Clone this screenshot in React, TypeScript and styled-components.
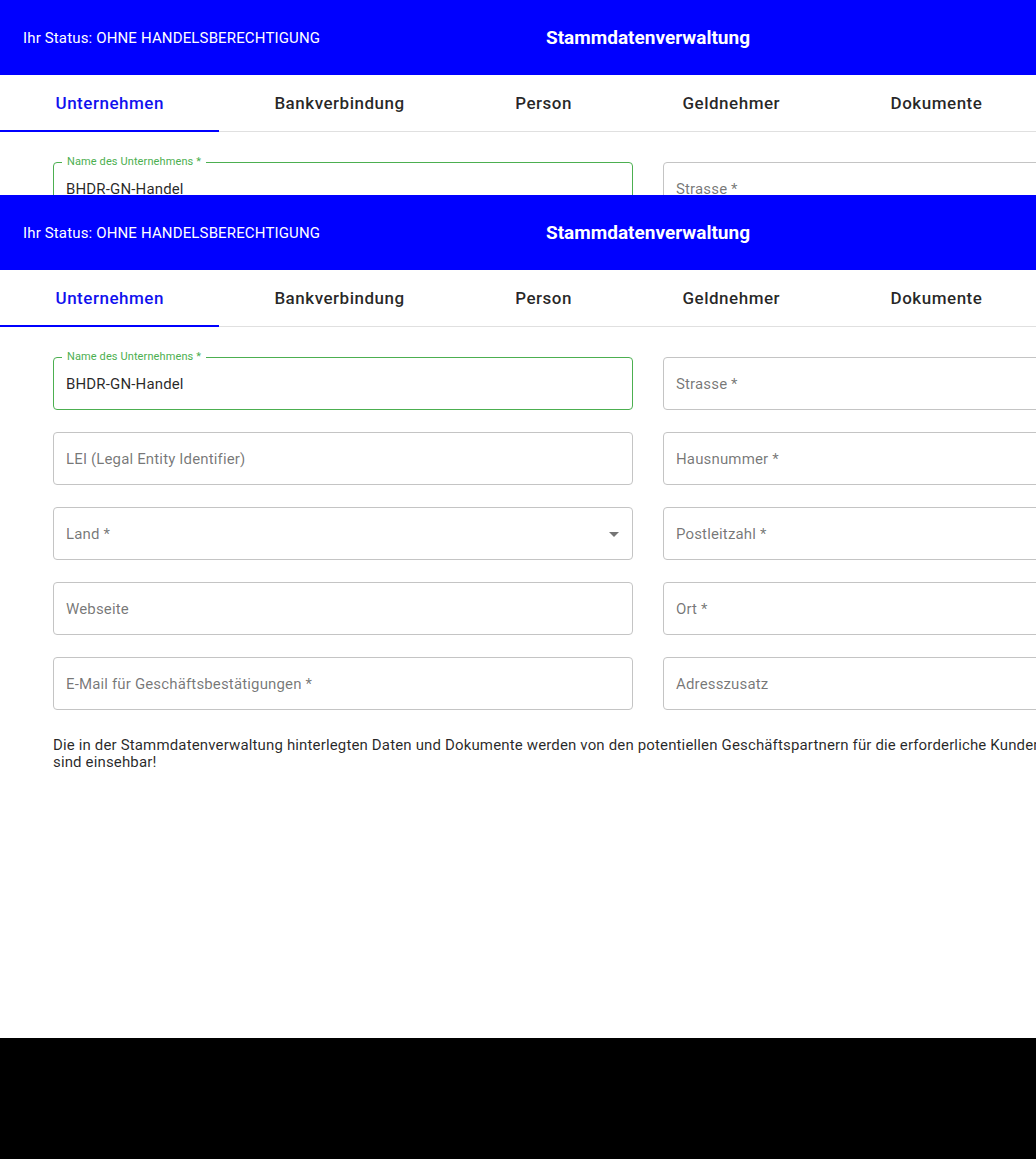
import React from "react";
import styled, { createGlobalStyle } from "styled-components";

const Global = createGlobalStyle`
  html, body { margin: 0; padding: 0; background: #000; overflow: hidden; }
  body { font-family: Roboto, "Noto Sans", "Liberation Sans", sans-serif; }
  * { box-sizing: border-box; }
`;

const Viewport = styled.div`
  width: 1036px;
  overflow: hidden;
  display: flex;
  flex-direction: column;
`;

const Frame = styled.div<{ $h: number }>`
  height: ${(p) => p.$h}px;
  overflow: hidden;
  background: #fff;
  flex: none;
`;

const Page = styled.div`
  width: 1296px;
  background: #fff;
`;

const Header = styled.header`
  height: 75px;
  background: #0000ff;
  color: #fff;
  display: grid;
  grid-template-columns: 1fr auto 1fr;
  align-items: center;
  padding: 0 23px;
`;

const Status = styled.div`
  font-size: 15px;
  font-weight: 400;
  letter-spacing: 0.01em;
`;

const Title = styled.h1`
  margin: 0;
  font-size: 19px;
  font-weight: 700;
  letter-spacing: 0;
`;

const TabBar = styled.nav`
  height: 57px;
  display: flex;
  border-bottom: 1px solid #e0e0e0;
`;

const Tab = styled.div<{ $active?: boolean }>`
  flex: none;
  padding: 0 55px 2px 55.5px;
  display: flex;
  align-items: center;
  justify-content: center;
  font-size: 17px;
  font-weight: 500;
  letter-spacing: 0.03em;
  color: ${(p) => (p.$active ? "#1111ee" : "rgba(0,0,0,0.85)")};
  box-shadow: ${(p) => (p.$active ? "inset 0 -2px 0 #0000ff" : "none")};
  margin-bottom: -1px;
`;

const Content = styled.section`
  padding: 30px 53px 0;
`;

const FormGrid = styled.div`
  display: grid;
  grid-template-columns: 1fr 1fr;
  column-gap: 30px;
  row-gap: 22px;
`;

const Field = styled.div<{ $focused?: boolean }>`
  position: relative;
  height: 53px;
  border: 1px solid ${(p) => (p.$focused ? "#4caf50" : "#c4c4c4")};
  border-radius: 4px;
  display: flex;
  align-items: center;
  padding: 0 12px;
  font-size: 15px;
  letter-spacing: 0.01em;
`;

const Placeholder = styled.span`
  color: rgba(0, 0, 0, 0.55);
`;

const Value = styled.span`
  color: rgba(0, 0, 0, 0.85);
`;

const FloatLabel = styled.span`
  position: absolute;
  top: -8px;
  left: 8px;
  padding: 0 5px;
  background: #fff;
  font-size: 11px;
  line-height: 14px;
  color: #4caf50;
  letter-spacing: 0.01em;
`;

const Arrow = styled.svg`
  position: absolute;
  right: 6px;
  top: 50%;
  transform: translateY(-50%);
  width: 24px;
  height: 24px;
  fill: rgba(0, 0, 0, 0.54);
`;

const Note = styled.p`
  margin: 27px 0 0;
  font-size: 15px;
  line-height: 17px;
  color: rgba(0, 0, 0, 0.85);
  letter-spacing: 0.01em;
`;

const tabs = ["Unternehmen", "Bankverbindung", "Person", "Geldnehmer", "Dokumente"];

function Stammdaten() {
  return (
    <Page>
      <Header>
        <Status>Ihr Status: OHNE HANDELSBERECHTIGUNG</Status>
        <Title>Stammdatenverwaltung</Title>
        <div />
      </Header>
      <TabBar>
        {tabs.map((t, i) => (
          <Tab key={t} $active={i === 0}>
            {t}
          </Tab>
        ))}
      </TabBar>
      <Content>
        <FormGrid>
          <Field $focused>
            <FloatLabel>Name des Unternehmens *</FloatLabel>
            <Value>BHDR-GN-Handel</Value>
          </Field>
          <Field>
            <Placeholder>Strasse *</Placeholder>
          </Field>
          <Field>
            <Placeholder>LEI (Legal Entity Identifier)</Placeholder>
          </Field>
          <Field>
            <Placeholder>Hausnummer *</Placeholder>
          </Field>
          <Field>
            <Placeholder>Land *</Placeholder>
            <Arrow viewBox="0 0 24 24">
              <path d="M7 10l5 5 5-5z" />
            </Arrow>
          </Field>
          <Field>
            <Placeholder>Postleitzahl *</Placeholder>
          </Field>
          <Field>
            <Placeholder>Webseite</Placeholder>
          </Field>
          <Field>
            <Placeholder>Ort *</Placeholder>
          </Field>
          <Field>
            <Placeholder>E-Mail für Geschäftsbestätigungen *</Placeholder>
          </Field>
          <Field>
            <Placeholder>Adresszusatz</Placeholder>
          </Field>
        </FormGrid>
        <Note>
          Die in der Stammdatenverwaltung hinterlegten Daten und Dokumente werden von den potentiellen
          Geschäftspartnern für die erforderliche Kundenprüfung genutzt und
          <br />
          sind einsehbar!
        </Note>
      </Content>
    </Page>
  );
}

export default function App() {
  return (
    <>
      <Global />
      <Viewport>
        <Frame $h={195}>
          <Stammdaten />
        </Frame>
        <Frame $h={843}>
          <Stammdaten />
        </Frame>
      </Viewport>
    </>
  );
}
